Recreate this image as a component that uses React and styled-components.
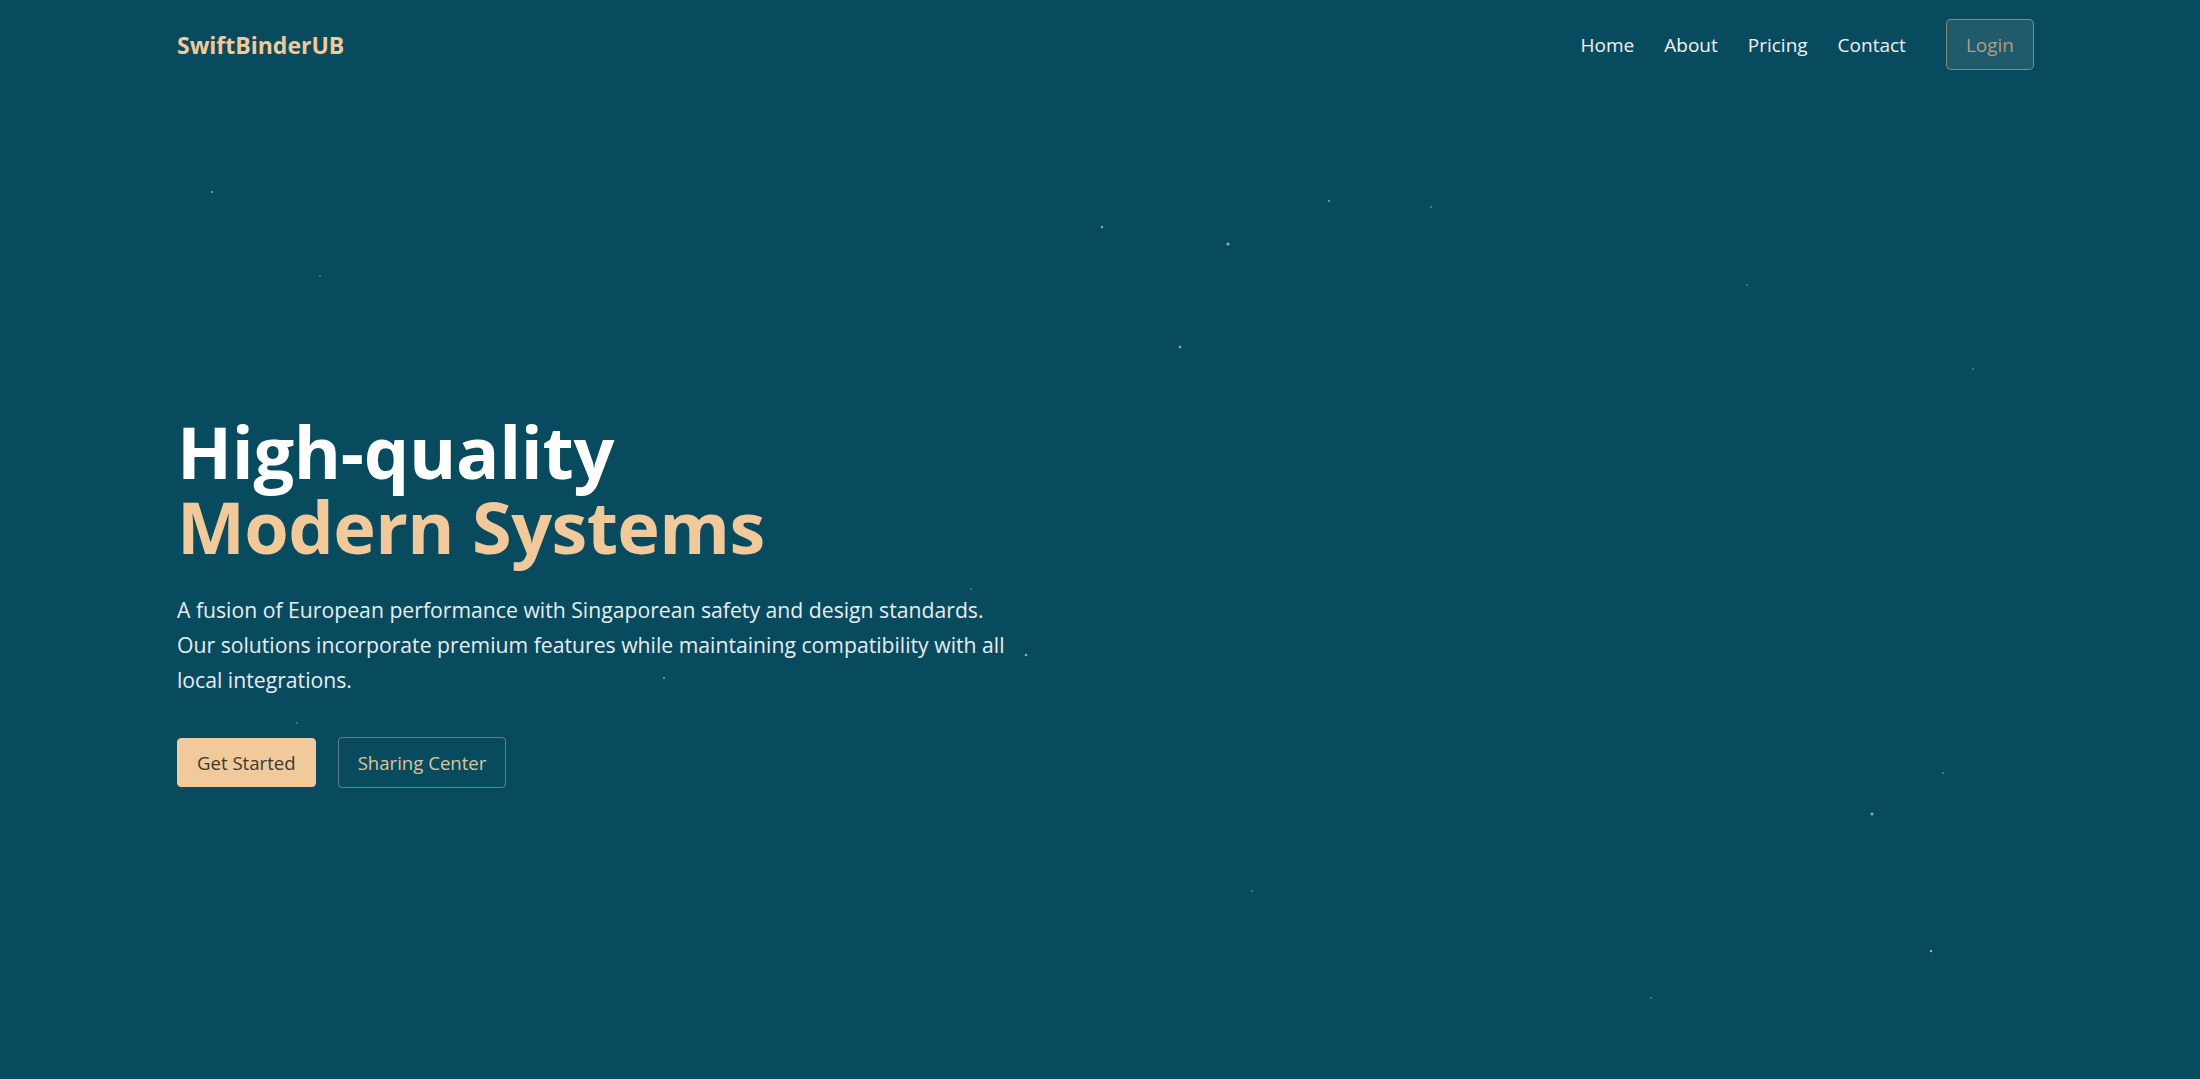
import React from "react";
import styled, { createGlobalStyle } from "styled-components";

const GlobalStyle = createGlobalStyle`
  html, body {
    margin: 0;
    padding: 0;
    background: #094b5e;
  }

  body {
    font-family: "Open Sans", "Noto Sans", "Liberation Sans", sans-serif;
    color: #ffffff;
    overflow: hidden;
  }
`;

const Page = styled.div`
  position: relative;
  min-height: 100vh;
  background: #094b5e;
  overflow: hidden;
`;

const Stars = styled.svg`
  position: absolute;
  inset: 0;
  width: 100%;
  height: 100%;
  pointer-events: none;
`;

const Header = styled.header`
  position: relative;
  display: flex;
  align-items: center;
  justify-content: space-between;
  padding: 19px 166px 19px 177px;
`;

const Logo = styled.div`
  font-size: 23px;
  font-weight: 700;
  color: #f2c99a;
`;

const Nav = styled.nav`
  display: flex;
  align-items: center;
  gap: 30px;
`;

const NavLink = styled.a`
  font-size: 19px;
  color: #eef3f4;
  text-decoration: none;
  cursor: pointer;
`;

const LoginButton = styled.button`
  margin-left: 10px;
  height: 51px;
  padding: 0 19px;
  font-family: inherit;
  font-size: 19px;
  color: #b09f82;
  background: #1f5b6b;
  border: 1px solid rgba(242, 201, 154, 0.45);
  border-radius: 5px;
  cursor: pointer;
`;

const Hero = styled.section`
  position: relative;
  padding: 325px 177px 0;
`;

const Heading = styled.h1`
  margin: 0;
  font-size: 72px;
  font-weight: 700;
  line-height: 75px;
  color: #ffffff;
  letter-spacing: -0.3px;
`;

const Accent = styled.span`
  display: block;
  color: #f2c99a;
  letter-spacing: -0.6px;
`;

const Lead = styled.p`
  margin: 28px 0 0;
  max-width: 840px;
  font-size: 21.2px;
  line-height: 35px;
  color: #e6eef0;
`;

const Actions = styled.div`
  display: flex;
  align-items: center;
  gap: 22px;
  margin-top: 40px;
`;

const Button = styled.button`
  height: ${(p) => (p.$outline ? "51px" : "49px")};
  padding: 0 19px;
  font-family: inherit;
  font-size: 18.6px;
  border-radius: 4px;
  cursor: pointer;
  color: ${(p) => (p.$outline ? "#d9c5a2" : "#3b3a30")};
  background: ${(p) => (p.$outline ? "transparent" : "#f2c99a")};
  border: 1px solid ${(p) => (p.$outline ? "rgba(200, 200, 190, 0.45)" : "#f2c99a")};
`;

const stars = [
  [212, 192, 1], [320, 276, 0.8], [1102, 227, 1.2], [1228, 244, 1.6],
  [1329, 201, 1], [1431, 207, 0.8], [1747, 285, 0.7], [1180, 347, 1.3],
  [1973, 369, 0.8], [971, 589, 0.7], [1026, 655, 1.3], [664, 678, 1],
  [297, 723, 0.7], [1943, 773, 0.8], [1872, 814, 1.5], [1252, 891, 0.8],
  [1931, 951, 1.3], [1651, 998, 0.8],
];

export default function App() {
  return (
    <Page>
      <GlobalStyle />
      <Stars>
        {stars.map(([x, y, r], i) => (
          <circle key={i} cx={x} cy={y} r={r} fill="#8fc9dc" opacity={0.85} />
        ))}
      </Stars>
      <Header>
        <Logo>SwiftBinderUB</Logo>
        <Nav>
          <NavLink>Home</NavLink>
          <NavLink>About</NavLink>
          <NavLink>Pricing</NavLink>
          <NavLink>Contact</NavLink>
          <LoginButton>Login</LoginButton>
        </Nav>
      </Header>
      <Hero>
        <Heading>
          High-quality
          <Accent>Modern Systems</Accent>
        </Heading>
        <Lead>
          A fusion of European performance with Singaporean safety and design standards.
          Our solutions incorporate premium features while maintaining compatibility with all
          local integrations.
        </Lead>
        <Actions>
          <Button>Get Started</Button>
          <Button $outline>Sharing Center</Button>
        </Actions>
      </Hero>
    </Page>
  );
}
